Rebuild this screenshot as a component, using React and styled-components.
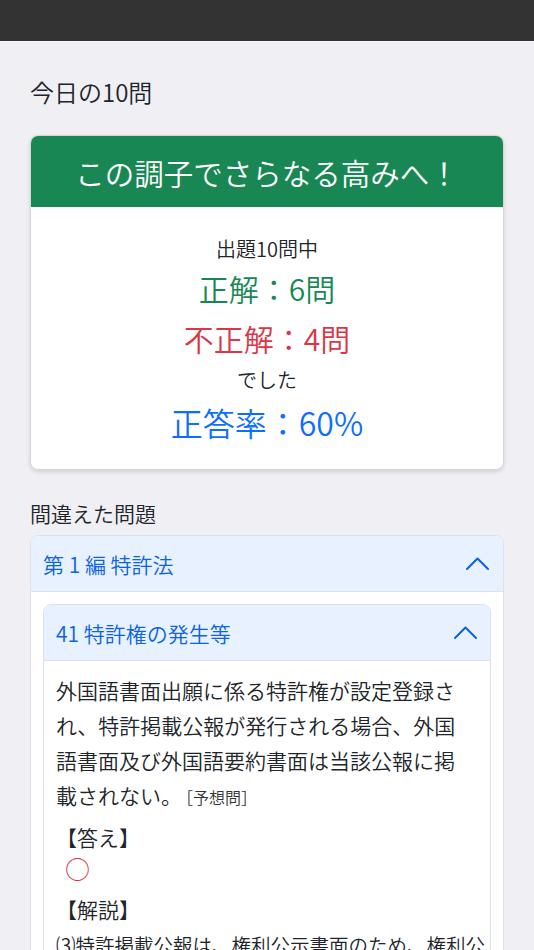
import React from "react";
import styled, { createGlobalStyle } from "styled-components";

const GlobalStyle = createGlobalStyle`
  html, body {
    margin: 0;
    padding: 0;
    background: #efeff4;
  }
  body {
    font-family: "Noto Sans CJK JP", "Noto Sans", sans-serif;
    font-weight: 350;
    color: #212529;
  }
  * { box-sizing: border-box; }
`;

const TopBar = styled.header`
  height: 42px;
  background: #333333;
  border-bottom: 1px solid #f7f7f9;
`;

const Main = styled.main`
  padding: 32px 30px 0;
`;

const SectionTitle = styled.h2`
  margin: ${(p) => p.$mt || 0}px 0 0;
  font-size: ${(p) => p.$size}px;
  line-height: ${(p) => p.$lh}px;
  font-weight: 350;
  color: #212529;
`;

const ResultCard = styled.section`
  margin-top: 25px;
  background: #fff;
  border: 1px solid #d6d6d9;
  border-radius: 8px;
  overflow: hidden;
  box-shadow: 0 2px 4px rgba(0, 0, 0, 0.12);
`;

const CardHeader = styled.div`
  height: 71px;
  display: flex;
  align-items: center;
  justify-content: center;
  background: #198754;
  color: #fff;
  font-size: 29.5px;
`;

const CardBody = styled.div`
  padding: 27px 0 21px;
  text-align: center;
`;

const ResultLine = styled.div`
  font-size: ${(p) => p.$size}px;
  line-height: ${(p) => p.$lh}px;
  color: ${(p) => p.$color || "#212529"};
`;

const Accordion = styled.div`
  margin-top: ${(p) => p.$mt}px;
  background: #fff;
  border: 1px solid #dee2e6;
  border-radius: 8px;
  overflow: hidden;
`;

const AccordionHeader = styled.div`
  height: 56px;
  display: flex;
  align-items: center;
  justify-content: space-between;
  padding: 0 ${(p) => p.$pr}px 0 12px;
  background: #e7f1ff;
  border-bottom: 1px solid #dee2e6;
  color: #0c63e4;
  font-size: 21px;
`;

const OuterBody = styled.div`
  padding: 12px 12px 0;
`;

const InnerBody = styled.div`
  padding: 12px 0 12px 12px;
`;

const Question = styled.p`
  margin: 0;
  padding-right: 20px;
  font-size: 21px;
  line-height: 35px;
  color: #212529;
`;

const SourceTag = styled.span`
  padding-left: 3px;
  font-size: 16px;
  color: #333;
`;

const Label = styled.div`
  margin-top: ${(p) => p.$mt}px;
  font-size: 21px;
  line-height: 35px;
`;

const AnswerMark = styled.div`
  padding-left: 9px;
  font-size: 25px;
  line-height: 26px;
  color: #dc3545;
`;

const Explanation = styled.p`
  margin: 0;
  font-size: 19.5px;
  line-height: 35px;
  color: #212529;
`;

const Chevron = () => (
  <svg width="23" height="13" viewBox="0 0 23 13" fill="none">
    <path
      d="M1 12 L11.5 1.5 L22 12"
      stroke="#0c63e4"
      strokeWidth="2"
      strokeLinecap="round"
      strokeLinejoin="round"
    />
  </svg>
);

export default function App() {
  return (
    <>
      <GlobalStyle />
      <TopBar />
      <Main>
        <SectionTitle $size={24} $lh={36}>今日の10問</SectionTitle>
        <ResultCard>
          <CardHeader>この調子でさらなる高みへ！</CardHeader>
          <CardBody>
            <ResultLine $size={20} $lh={30}>出題10問中</ResultLine>
            <ResultLine $size={30} $lh={48} $color="#198754">正解：6問</ResultLine>
            <ResultLine $size={30} $lh={52} $color="#dc3545">不正解：4問</ResultLine>
            <ResultLine $size={20} $lh={32}>でした</ResultLine>
            <ResultLine $size={32} $lh={52} $color="#0d6efd">正答率：60%</ResultLine>
          </CardBody>
        </ResultCard>
        <SectionTitle $size={21} $lh={32} $mt={27}>間違えた問題</SectionTitle>
        <Accordion $mt={6}>
          <AccordionHeader $pr={14}>
            <span>第 1 編 特許法</span>
            <Chevron />
          </AccordionHeader>
          <OuterBody>
            <Accordion $mt={0}>
              <AccordionHeader $pr={13}>
                <span>41 特許権の発生等</span>
                <Chevron />
              </AccordionHeader>
              <InnerBody>
                <Question>
                  外国語書面出願に係る特許権が設定登録され、特許掲載公報が発行される場合、外国語書面及び外国語要約書面は当該公報に掲載されない。<SourceTag>［予想問］</SourceTag>
                </Question>
                <Label $mt={5}>【答え】</Label>
                <AnswerMark>○</AnswerMark>
                <Label $mt={11}>【解説】</Label>
                <Explanation>
                  ⑶特許掲載公報は、権利公示書面のため、権利公示に必要な事項が掲載される。外国語書面及び外国語要約書面は、出願公開の公報に掲載される。
                </Explanation>
              </InnerBody>
            </Accordion>
          </OuterBody>
        </Accordion>
      </Main>
    </>
  );
}
